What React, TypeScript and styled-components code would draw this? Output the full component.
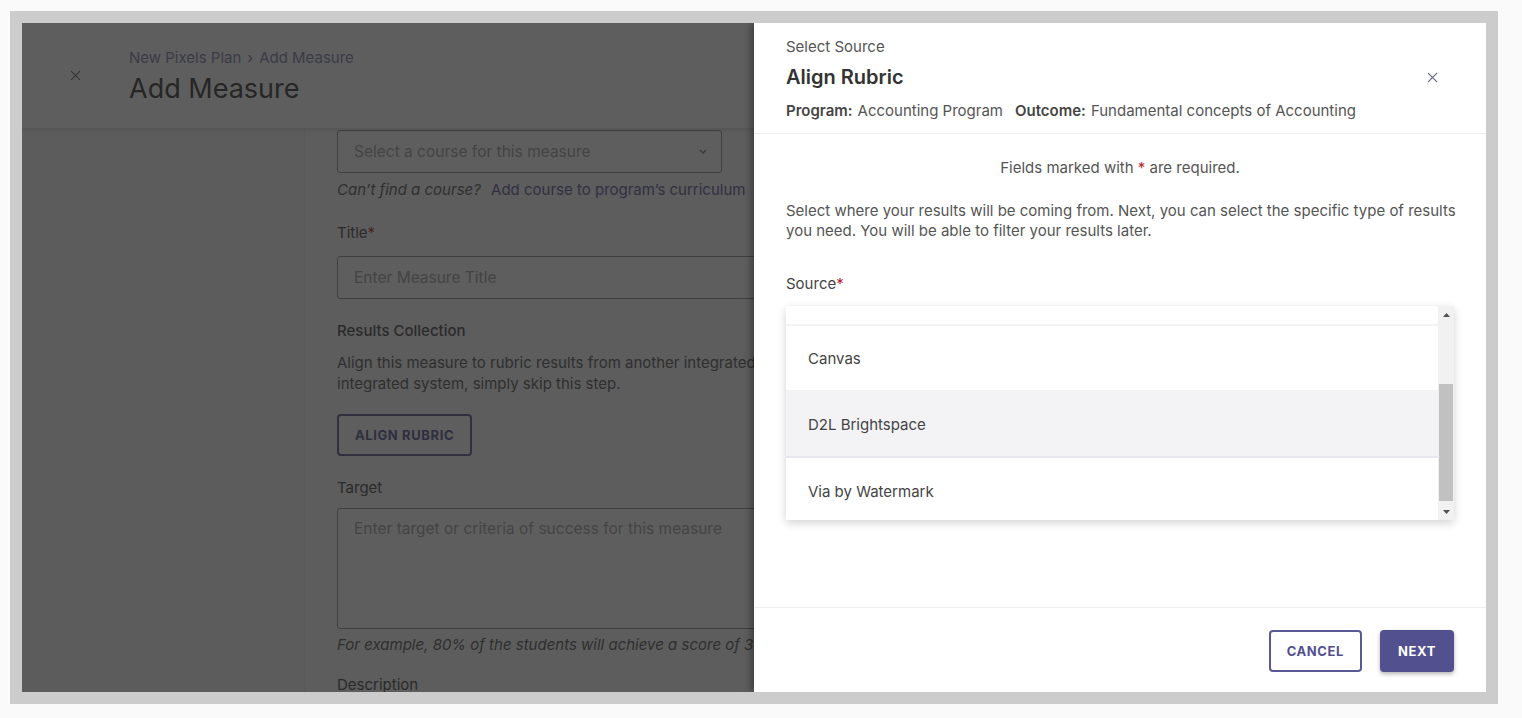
import { useEffect, useRef } from "react";
import styled, { createGlobalStyle } from "styled-components";

const GlobalStyle = createGlobalStyle`
  body {
    margin: 0;
    background: #fafafa;
    font-family: Inter, "Noto Sans", sans-serif;
  }
  * {
    box-sizing: border-box;
  }
`;

const Frame = styled.div`
  margin: 11px 0 0 10px;
  width: 1488px;
  height: 693px;
  border: 12px solid #cccccc;
  position: relative;
  overflow: hidden;
  background: #f8f8f8;
`;

const Page = styled.div`
  display: flex;
  flex-direction: column;
  height: 100%;
`;

const PageHeader = styled.header`
  height: 105px;
  flex-shrink: 0;
  display: flex;
  background: #ffffff;
  box-shadow: 0 2px 4px rgba(0, 0, 0, 0.12);
  position: relative;
  z-index: 1;
`;

const HeaderClose = styled.div`
  width: 107px;
  display: flex;
  justify-content: center;
  padding-top: 47px;
  color: #6b6b6b;
`;

const HeaderTitles = styled.div`
  padding-top: 25px;
`;

const Breadcrumb = styled.div`
  font-size: 15px;
  line-height: 20px;
  color: #7f7ea6;
  display: flex;
  gap: 6px;
  align-items: center;
`;

const Heading = styled.h1`
  margin: 5px 0 0;
  font-size: 27px;
  line-height: 32px;
  font-weight: 400;
  color: #333333;
`;

const Main = styled.div`
  flex: 1;
  display: flex;
`;

const Sidebar = styled.aside`
  width: 283px;
  border-right: 1px solid #ededed;
  background: #f8f8f8;
`;

const Form = styled.div`
  width: 740px;
  padding: 2px 0 0 32px;
  display: flex;
  flex-direction: column;
  background: #f9f9f9;
  flex: 1;
`;

const FieldBox = styled.div<{ $w: number; $h: number; $mt: number }>`
  width: ${(p) => p.$w}px;
  height: ${(p) => p.$h}px;
  margin-top: ${(p) => p.$mt}px;
  border: 1px solid #8f8f8f;
  border-radius: 3px;
  background: #ffffff;
  padding: ${(p) => (p.$h > 60 ? "10px" : "0")} 14px 0 16px;
  display: flex;
  align-items: ${(p) => (p.$h > 60 ? "flex-start" : "center")};
  justify-content: space-between;
  font-size: 15.5px;
  color: #a0a0a0;
`;

const Label = styled.div<{ $mt: number; $strong?: boolean }>`
  margin-top: ${(p) => p.$mt}px;
  font-size: 15px;
  line-height: 20px;
  font-weight: ${(p) => (p.$strong ? 500 : 400)};
  color: #444444;
`;

const Star = styled.span`
  color: #b3232f;
`;

const Helper = styled.div<{ $mt: number }>`
  margin-top: ${(p) => p.$mt}px;
  font-size: 15px;
  line-height: 20px;
  font-style: italic;
  color: #555555;
  white-space: nowrap;
`;

const Link = styled.span`
  font-style: normal;
  color: #5d5a96;
  margin-left: 6px;
`;

const Para = styled.p`
  margin: 11px 0 0;
  font-size: 15px;
  line-height: 21px;
  color: #555555;
  white-space: nowrap;
`;

const OutlineButton = styled.button<{ $mt?: number }>`
  margin-top: ${(p) => p.$mt ?? 0}px;
  height: 42px;
  padding: 0 16px;
  border: 2px solid #5b5896;
  border-radius: 4px;
  background: #ffffff;
  color: #53508f;
  font-family: inherit;
  font-size: 13px;
  font-weight: 700;
  letter-spacing: 0.6px;
  cursor: pointer;
  align-self: flex-start;
`;

const Overlay = styled.div`
  position: absolute;
  inset: 0;
  background: rgba(33, 33, 33, 0.725);
  z-index: 2;
`;

const Drawer = styled.section`
  position: absolute;
  top: 0;
  right: 0;
  bottom: 0;
  width: 732px;
  background: #ffffff;
  z-index: 3;
  display: flex;
  flex-direction: column;
  box-shadow: -3px 0 7px rgba(0, 0, 0, 0.35);
`;

const DrawerHeader = styled.div`
  padding: 14px 32px 12px;
  border-bottom: 1px solid #efefef;
`;

const Eyebrow = styled.div`
  font-size: 15px;
  line-height: 20px;
  color: #555555;
`;

const TitleRow = styled.div`
  margin-top: 8px;
  height: 24px;
  display: flex;
  align-items: center;
  justify-content: space-between;
`;

const DrawerTitle = styled.h2`
  margin: 0;
  font-size: 20px;
  font-weight: 600;
  color: #333333;
`;

const CloseButton = styled.button`
  width: 44px;
  height: 24px;
  border: 0;
  background: none;
  display: flex;
  align-items: center;
  justify-content: center;
  color: #6a6a8a;
  padding: 0;
  cursor: pointer;
`;

const Meta = styled.div`
  margin-top: 12px;
  font-size: 15px;
  line-height: 20px;
  color: #555555;
  display: flex;
  gap: 12px;
`;

const MetaKey = styled.span`
  font-weight: 600;
  color: #444444;
  margin-right: 5px;
`;

const DrawerBody = styled.div`
  flex: 1;
  padding: 24px 32px 0;
`;

const Required = styled.div`
  text-align: center;
  font-size: 15px;
  line-height: 20px;
  color: #555555;
`;

const Intro = styled.p`
  margin: 23px -14px 0 0;
  font-size: 15px;
  line-height: 20px;
  color: #555555;
`;

const SourceLabel = styled.div`
  margin-top: 33px;
  font-size: 15px;
  line-height: 20px;
  color: #444444;
`;

const ListBox = styled.div`
  margin-top: 12px;
  height: 214px;
  display: flex;
  background: #ffffff;
  box-shadow: 0 3px 10px rgba(0, 0, 0, 0.18);
  border-radius: 2px;
`;

const OptionViewport = styled.ul`
  flex: 1;
  margin: 0;
  padding: 0;
  list-style: none;
  overflow: hidden;
`;

const Option = styled.li<{ $active?: boolean }>`
  height: 66px;
  padding: 0 22px;
  display: flex;
  align-items: center;
  font-size: 15px;
  color: #444444;
  background: ${(p) => (p.$active ? "#f3f3f6" : "#ffffff")};
  border-bottom: 2px solid ${(p) => (p.$active ? "#e7e7ee" : "#f3f3f3")};
  &:last-child {
    border-bottom: 0;
  }
`;

const ScrollBar = styled.div`
  width: 16px;
  background: #f1f1f1;
  display: flex;
  flex-direction: column;
`;

const ScrollArrow = styled.div`
  height: 17px;
  display: flex;
  align-items: center;
  justify-content: center;
  color: #505050;
`;

const ScrollTrack = styled.div`
  flex: 1;
  padding: 0 1px;
`;

const Thumb = styled.div`
  background: #c1c1c1;
`;

const DrawerFooter = styled.div`
  border-top: 1px solid #efefef;
  padding: 22px 32px 20px 0;
  display: flex;
  justify-content: flex-end;
  gap: 18px;
`;

const PrimaryButton = styled.button`
  height: 42px;
  padding: 0 18px;
  border: 0;
  border-radius: 4px;
  background: #53508f;
  color: #ffffff;
  font-family: inherit;
  font-size: 13px;
  font-weight: 700;
  letter-spacing: 0.6px;
  box-shadow: 0 2px 4px rgba(0, 0, 0, 0.3);
  cursor: pointer;
`;

const Cross = ({ size = 12 }: { size?: number }) => (
  <svg width={size} height={size} viewBox="0 0 12 12" fill="none">
    <path d="M1.5 1.5l9 9M10.5 1.5l-9 9" stroke="currentColor" strokeWidth="1.4" strokeLinecap="round" />
  </svg>
);

const Chevron = () => (
  <svg width="8" height="5" viewBox="0 0 8 5" fill="none">
    <path d="M1 1l3 3 3-3" stroke="#777" strokeWidth="1.3" />
  </svg>
);

const Triangle = ({ up }: { up?: boolean }) => (
  <svg width="7" height="4" viewBox="0 0 7 4">
    <path d={up ? "M0 4L3.5 0 7 4z" : "M0 0l3.5 4L7 0z"} fill="currentColor" />
  </svg>
);

const sources = ["Anthology", "Blackboard Learn", "Canvas", "D2L Brightspace", "Via by Watermark"];

const ITEM_H = 66;
const VIEW_H = 214;
const SCROLL_TOP = 112;
const TRACK_H = VIEW_H - 34;

function App() {
  const listRef = useRef<HTMLUListElement>(null);
  const contentH = sources.length * ITEM_H;
  const maxScroll = contentH - VIEW_H;
  const thumbH = Math.round((TRACK_H * VIEW_H) / contentH);
  const thumbTop = Math.round(((TRACK_H - thumbH) * SCROLL_TOP) / maxScroll);

  useEffect(() => {
    if (listRef.current) listRef.current.scrollTop = SCROLL_TOP;
  }, []);

  return (
    <>
      <GlobalStyle />
      <Frame>
        <Page>
          <PageHeader>
            <HeaderClose>
              <Cross size={11} />
            </HeaderClose>
            <HeaderTitles>
              <Breadcrumb>
                <span>New Pixels Plan</span>
                <span>›</span>
                <span>Add Measure</span>
              </Breadcrumb>
              <Heading>Add Measure</Heading>
            </HeaderTitles>
          </PageHeader>
          <Main>
            <Sidebar />
            <Form>
              <FieldBox $w={385} $h={43} $mt={0}>
                <span>Select a course for this measure</span>
                <Chevron />
              </FieldBox>
              <Helper $mt={7}>
                Can’t find a course? <Link>Add course to program’s curriculum</Link>
              </Helper>
              <Label $mt={23}>
                Title<Star>*</Star>
              </Label>
              <FieldBox $w={680} $h={43} $mt={13}>
                <span>Enter Measure Title</span>
              </FieldBox>
              <Label $mt={22} $strong>
                Results Collection
              </Label>
              <Para>
                Align this measure to rubric results from another integrated system. If you prefer not to use an
                <br />
                integrated system, simply skip this step.
              </Para>
              <OutlineButton $mt={20}>ALIGN RUBRIC</OutlineButton>
              <Label $mt={22}>Target</Label>
              <FieldBox $w={680} $h={121} $mt={10}>
                <span>Enter target or criteria of success for this measure</span>
              </FieldBox>
              <Helper $mt={6}>For example, 80% of the students will achieve a score of 3 or higher</Helper>
              <Label $mt={20}>Description</Label>
            </Form>
          </Main>
        </Page>
        <Overlay />
        <Drawer>
          <DrawerHeader>
            <Eyebrow>Select Source</Eyebrow>
            <TitleRow>
              <DrawerTitle>Align Rubric</DrawerTitle>
              <CloseButton aria-label="Close">
                <Cross size={11} />
              </CloseButton>
            </TitleRow>
            <Meta>
              <span>
                <MetaKey>Program:</MetaKey>Accounting Program
              </span>
              <span>
                <MetaKey>Outcome:</MetaKey>Fundamental concepts of Accounting
              </span>
            </Meta>
          </DrawerHeader>
          <DrawerBody>
            <Required>
              Fields marked with <Star>*</Star> are required.
            </Required>
            <Intro>
              Select where your results will be coming from. Next, you can select the specific type of results you
              need. You will be able to filter your results later.
            </Intro>
            <SourceLabel>
              Source<Star>*</Star>
            </SourceLabel>
            <ListBox>
              <OptionViewport ref={listRef}>
                {sources.map((s) => (
                  <Option key={s} $active={s === "D2L Brightspace"}>
                    {s}
                  </Option>
                ))}
              </OptionViewport>
              <ScrollBar>
                <ScrollArrow>
                  <Triangle up />
                </ScrollArrow>
                <ScrollTrack>
                  <Thumb style={{ marginTop: thumbTop, height: thumbH }} />
                </ScrollTrack>
                <ScrollArrow>
                  <Triangle />
                </ScrollArrow>
              </ScrollBar>
            </ListBox>
          </DrawerBody>
          <DrawerFooter>
            <OutlineButton>CANCEL</OutlineButton>
            <PrimaryButton>NEXT</PrimaryButton>
          </DrawerFooter>
        </Drawer>
      </Frame>
    </>
  );
}

export default App;
